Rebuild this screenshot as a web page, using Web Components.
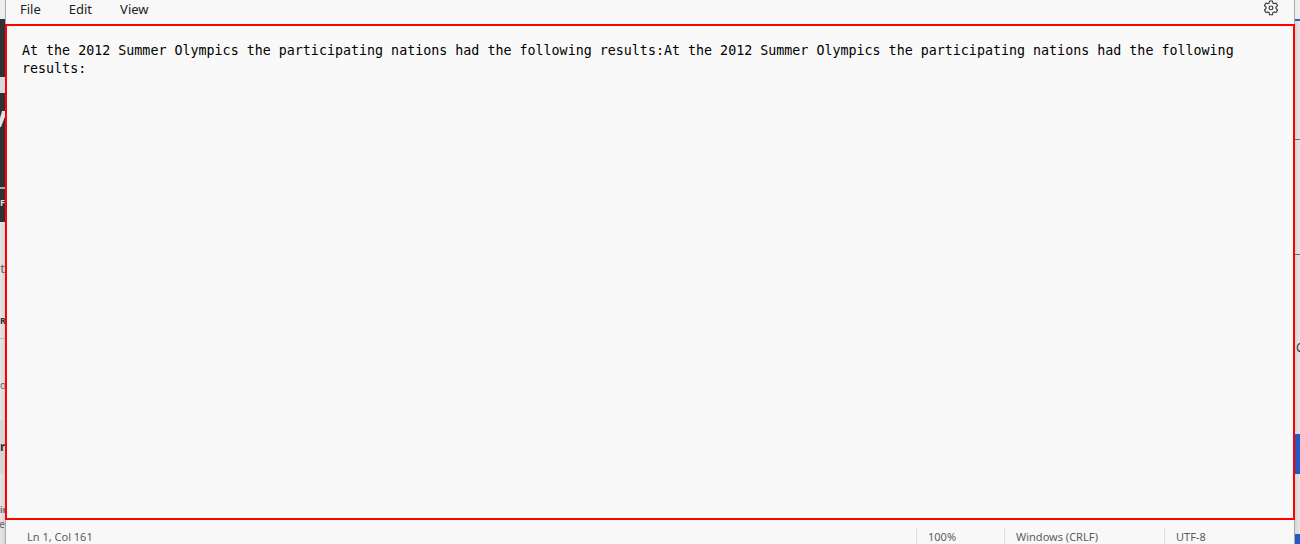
<!DOCTYPE html>
<html lang="en">
<head>
<meta charset="utf-8">
<title>Notepad</title>
<style>
html, body { margin: 0; height: 100%; }
body { font-family: "Noto Sans", "Open Sans", sans-serif; font-size: 13px; background: #e6e6e6; }
</style>
</head>
<body>
<desktop-view>
  <page-strip slot="left" side="left"></page-strip>
  <notepad-window>
    <menu-bar slot="menu"></menu-bar>
    <text-editor>At the 2012 Summer Olympics the participating nations had the following results:At the 2012 Summer Olympics the participating nations had the following results:</text-editor>
    <status-bar slot="status">
      <span slot="position">Ln 1, Col 161</span>
      <span slot="zoom">100%</span>
      <span slot="endings">Windows (CRLF)</span>
      <span slot="encoding">UTF-8</span>
    </status-bar>
  </notepad-window>
  <page-strip slot="right" side="right"></page-strip>
</desktop-view>
<script>
class BaseElement extends HTMLElement {
  connectedCallback() {
    if (!this.shadowRoot) this.attachShadow({ mode: "open" }).innerHTML = this.render();
  }
}

customElements.define("desktop-view", class extends BaseElement {
  render() {
    return `<style>
      :host { display: grid; grid-template-columns: 6px minmax(0, 1fr) 6px; height: 100vh; overflow: hidden; }
    </style><slot name="left"></slot><slot></slot><slot name="right"></slot>`;
  }
});

/* Slivers of the page that lies behind the window. */
customElements.define("page-strip", class extends BaseElement {
  render() {
    const left = `
      <div style="height:19px;background:#ededed"></div>
      <div style="height:58px" class="dark"></div>
      <div style="height:16px;background:#d9d9d9"></div>
      <div style="height:18px" class="dark"></div>
      <svg width="6" height="76" viewBox="0 0 6 76"><path d="M0 0h6v76H0z" fill="#303133"/><path d="M2 0h4v3L1 16H0V7z" fill="#e2e2e2"/></svg>
      <div style="height:2px;background:#a8a8a8"></div>
      <div style="height:33px;line-height:28px;color:#ddd" class="dark small">F</div>
      <div class="end" style="height:92px;line-height:92px">t</div>
      <div class="small" style="height:24px;line-height:14px;color:#333">R</div>
      <div class="rule" style="height:82px;line-height:92px;font-size:10px">o</div>
      <div style="height:54px;line-height:54px;background:#d6d6d6;color:#333;font-size:12px;font-weight:700">r</div>
      <div style="height:26px"></div>
      <div class="small" style="height:16px;line-height:20px">in</div>
      <div class="end" style="height:16px;line-height:16px;font-size:10px">ce</div>`;
    const right = `
      <div style="height:19px;background:#eee"></div>
      <div style="height:2px;background:#2b61cc"></div>
      <div style="height:118px"></div>
      <div style="height:1px;background:#666"></div>
      <div style="height:114px"></div>
      <div style="height:1px;background:#666"></div>
      <div style="height:179px;line-height:186px;padding-left:2px;font-size:12px;color:#333">C</div>
      <div style="height:40px;background:#235ac6"></div>
      <div style="height:60px"></div>
      <div style="flex:1;background:#235ac6"></div>`;
    const isLeft = this.getAttribute("side") === "left";
    return `<style>
      :host { display: flex; flex-direction: column; overflow: hidden; min-width: 0; color: #666; background: linear-gradient(to ${isLeft ? "left" : "right"}, #d2d2d2, #e6e6e6); }
      div, svg { flex-shrink: 0; display: block; box-sizing: border-box; overflow: hidden; white-space: nowrap; }
      .dark { background: #303133; }
      .rule { border-top: 1px solid #bbb; }
      .end { direction: rtl; padding-right: 1px; }
      .small { font-size: 9px; font-weight: 700; }
    </style>${isLeft ? left : right}`;
  }
});

customElements.define("notepad-window", class extends BaseElement {
  render() {
    return `<style>
      :host { display: flex; flex-direction: column; min-width: 0; min-height: 0; position: relative; background: #f8f8f8; box-shadow: 0 0 0 1px #aaa; }
    </style><slot name="menu"></slot><slot></slot><slot name="status"></slot>`;
  }
});

customElements.define("menu-bar", class extends BaseElement {
  render() {
    return `<style>
      :host { display: flex; align-items: flex-start; justify-content: space-between; height: 24px; padding: 0 15px 0 14px; flex-shrink: 0; box-sizing: border-box; }
      nav { display: flex; gap: 28px; }
      button { border: 0; padding: 0; margin: 0; background: none; font: inherit; line-height: 18px; color: #222; display: block; }
      svg { display: block; }
    </style>
    <nav aria-label="Menu"><button>File</button><button>Edit</button><button>View</button></nav>
    <button aria-label="Settings"><svg width="16" height="16" viewBox="0 0 16 16" fill="none" stroke="#333" stroke-width="1.1" stroke-linejoin="round"><path d="M6.5 1h3l.4 2 1.2.7 2-.7 1.5 2.6-1.6 1.4v1.6l1.6 1.4-1.5 2.6-2-.7-1.2.7-.4 2.2h-3l-.4-2.2-1.2-.7-2 .7L1.4 10 3 8.600V7L1.400 5.600 2.900 3l2 .7L6.100 3z"/><circle cx="8" cy="7.900" r="1.900"/></svg></button>`;
  }
});

customElements.define("text-editor", class extends BaseElement {
  render() {
    return `<style>
      :host { display: flex; flex: 1; min-height: 0; margin: 0 -1px; border: 2px solid #f00; background: #f9f9f9; }
      textarea { flex: 1; box-sizing: border-box; min-width: 0; margin: 0; padding: 16px 15px; border: 0; outline: 0; resize: none; overflow: hidden; background: transparent; color: #000; font: 10pt/18px "DejaVu Sans Mono", monospace; }
    </style><textarea aria-label="Document text" spellcheck="false">${this.textContent.trim()}</textarea>`;
  }
});

customElements.define("status-bar", class extends BaseElement {
  render() {
    return `<style>
      :host { display: grid; grid-template-columns: minmax(0, 1fr) 88px 160px 130px; height: 24px; padding-top: 8px; box-sizing: border-box; flex-shrink: 0; overflow: hidden; font-size: 11px; line-height: 18px; color: #5c5c5c; }
      div { border-left: 1px solid #ddd; padding-left: 11px; }
      div:first-of-type { border: 0; padding-left: 21px; }
    </style>
    <div><slot name="position"></slot></div><div><slot name="zoom"></slot></div><div><slot name="endings"></slot></div><div><slot name="encoding"></slot></div>`;
  }
});
</script>
</body>
</html>
